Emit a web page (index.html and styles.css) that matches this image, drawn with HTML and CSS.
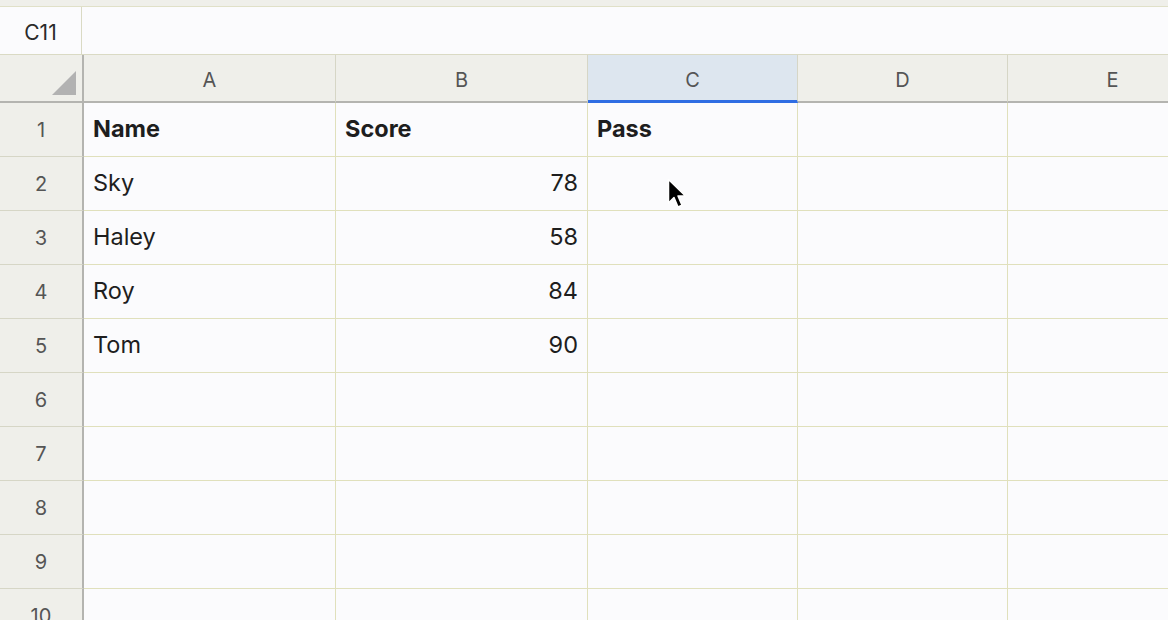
FILE: index.html
```html
<!DOCTYPE html>
<html lang="en">
<head>
  <meta charset="utf-8"/>
  <title>Sheet</title>
  <link rel="stylesheet" href="styles.css">
</head>
<body>
  <div class="sheet">
    <div class="top-strip"></div>
    <div class="formula-bar">
      <div class="name-box">C11</div>
      <div class="formula-input"></div>
    </div>

    <div class="grid">
      <div class="corner"><span class="corner-tri"></span></div>
      <div class="col-head">A</div>
      <div class="col-head">B</div>
      <div class="col-head active">C</div>
      <div class="col-head">D</div>
      <div class="col-head">E</div>

      <div class="row-head">1</div>
      <div class="cell bold">Name</div>
      <div class="cell bold">Score</div>
      <div class="cell bold">Pass</div>
      <div class="cell"></div>
      <div class="cell"></div>

      <div class="row-head">2</div>
      <div class="cell">Sky</div>
      <div class="cell num">78</div>
      <div class="cell"></div>
      <div class="cell"></div>
      <div class="cell"></div>

      <div class="row-head">3</div>
      <div class="cell">Haley</div>
      <div class="cell num">58</div>
      <div class="cell"></div>
      <div class="cell"></div>
      <div class="cell"></div>

      <div class="row-head">4</div>
      <div class="cell">Roy</div>
      <div class="cell num">84</div>
      <div class="cell"></div>
      <div class="cell"></div>
      <div class="cell"></div>

      <div class="row-head">5</div>
      <div class="cell">Tom</div>
      <div class="cell num">90</div>
      <div class="cell"></div>
      <div class="cell"></div>
      <div class="cell"></div>

      <div class="row-head">6</div>
      <div class="cell"></div><div class="cell"></div><div class="cell"></div><div class="cell"></div><div class="cell"></div>
      <div class="row-head">7</div>
      <div class="cell"></div><div class="cell"></div><div class="cell"></div><div class="cell"></div><div class="cell"></div>
      <div class="row-head">8</div>
      <div class="cell"></div><div class="cell"></div><div class="cell"></div><div class="cell"></div><div class="cell"></div>
      <div class="row-head">9</div>
      <div class="cell"></div><div class="cell"></div><div class="cell"></div><div class="cell"></div><div class="cell"></div>
      <div class="row-head">10</div>
      <div class="cell"></div><div class="cell"></div><div class="cell"></div><div class="cell"></div><div class="cell"></div>
    </div>

    <svg class="cursor" width="22" height="34" viewBox="0 0 22 34">
      <path d="M1.5 1.5 L1.5 25 L7 19.5 L11 29 L15 27.3 L11 18 L18.5 18 Z" fill="#000" stroke="#fff" stroke-width="1.5" stroke-linejoin="round"/>
    </svg>
  </div>
</body>
</html>
```

FILE: styles.css
```css
body {
  margin: 0;
  background: #fbfbfd;
  font-family: Inter, "Noto Sans", "Liberation Sans", sans-serif;
  color: #1e1e1e;
  overflow: hidden;
}
.sheet {
  position: relative;
  width: 1168px;
  height: 620px;
  overflow: hidden;
}
.top-strip {
  height: 6px;
  background: #efefea;
  border-bottom: 1px solid #e0e0c8;
}
.formula-bar {
  display: flex;
  height: 47px;
  border-bottom: 1px solid #dadac4;
  background: #fbfbfd;
}
.name-box {
  width: 82px;
  border-right: 1px solid #dadac4;
  display: flex;
  align-items: center;
  justify-content: center;
  font-size: 21px;
  color: #2a2a2a;
  padding-top: 3px;
  box-sizing: border-box;
}
.formula-input {
  flex: 1;
}
.grid {
  display: grid;
  grid-template-columns: 84px 252px 252px 210px 210px 210px;
  grid-template-rows: 48px repeat(10, 54px);
}
.corner,
.col-head,
.row-head {
  background: #efefea;
  color: #555;
  font-size: 20px;
  display: flex;
  align-items: center;
  justify-content: center;
  box-sizing: border-box;
}
.corner {
  position: relative;
  border-right: 2px solid #b4b4b0;
  border-bottom: 2px solid #b4b4b0;
}
.corner-tri {
  position: absolute;
  right: 6px;
  bottom: 6px;
  width: 0;
  height: 0;
  border-left: 24px solid transparent;
  border-bottom: 24px solid #b2b2b2;
}
.col-head {
  border-right: 1px solid #d6d6c6;
  border-bottom: 2px solid #b4b4b0;
  padding-top: 4px;
}
.col-head.active {
  background: #dde6ef;
  border-bottom: 3px solid #2f6de3;
  padding-top: 5px;
}
.row-head {
  border-right: 2px solid #b4b4b0;
  border-bottom: 1px solid #d6d6c6;
}
.cell {
  box-sizing: border-box;
  border-right: 1px solid #e0e0bc;
  border-bottom: 1px solid #e0e0bc;
  display: flex;
  align-items: center;
  padding: 0 9px 2px;
  font-size: 23.5px;
  color: #1e1e1e;
}
.cell.bold {
  font-weight: 700;
}
.cell.num {
  justify-content: flex-end;
}
.cursor {
  position: absolute;
  left: 667px;
  top: 178px;
}
```
